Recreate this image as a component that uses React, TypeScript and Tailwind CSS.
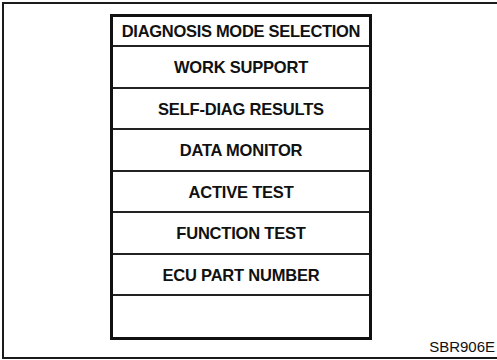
import React from 'react';

const MODES = [
	'WORK SUPPORT',
	'SELF-DIAG RESULTS',
	'DATA MONITOR',
	'ACTIVE TEST',
	'FUNCTION TEST',
	'ECU PART NUMBER',
	'',
];

export default function App(): React.ReactElement {
	return (
		<div
			className="w-[497px] h-[360px] bg-white pt-[2px] pl-[2px] pb-[1px]"
			style={{ fontFamily: '"Liberation Sans", Arial, sans-serif' }}
		>
			{/* Figure frame (open on the right) */}
			<div className="relative h-full border-t-2 border-l-2 border-b-2 border-[#1a1a1a]">
				<div className="pl-[106px] pt-[10px]">
					<div className="w-[262px] border-[3px] border-[#111] flex flex-col">
						<div className="h-[30px] flex items-center justify-center border-b-2 border-[#222] text-[16.5px] font-bold text-[#111] tracking-[-0.3px]">
							DIAGNOSIS MODE SELECTION
						</div>
						{MODES.map((label, i) => (
							<div
								key={i}
								className={
									i < MODES.length - 1
										? 'h-[41.5px] flex items-center justify-center pt-[2px] border-b-2 border-[#222] text-[16.5px] font-bold text-[#111] tracking-[-0.2px]'
										: 'h-[41px] flex items-center justify-center text-[16.5px] font-bold text-[#111]'
								}
							>
								{label}
							</div>
						))}
					</div>
				</div>
				{/* Figure reference code */}
				<div className="absolute right-[2px] bottom-[3px] text-[15px] text-[#111] leading-none">
					SBR906E
				</div>
			</div>
		</div>
	);
}
